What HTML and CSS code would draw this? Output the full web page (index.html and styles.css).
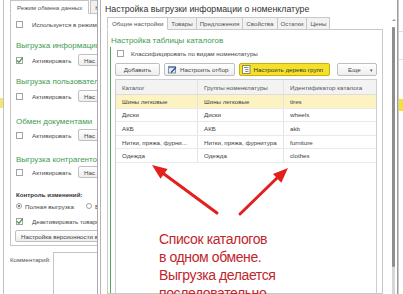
FILE: index.html
```html
<!DOCTYPE html>
<html lang="ru">
<head>
<meta charset="utf-8">
<link rel="stylesheet" href="styles.css">
</head>
<body>
<div class="desk">
  <div class="edge-left"><span class="edge-sel"></span></div>

  <div class="win-left">
    <div class="ltabs">
      <div class="ltab on">Режим обмена данных</div>
      <div class="ltab">Нас</div>
    </div>
    <div class="lpanel">
      <div class="row r-first"><span class="cb"></span><span class="lbl">Используется в режиме</span></div>

      <div class="ghead mt10">Выгрузка информации</div>
      <div class="row mt2"><span class="cb"><svg viewBox="0 0 7 7" width="7" height="7"><path d="M1 3.4 L2.9 5.3 L6.6 0.8" fill="none" stroke="#3d8f3d" stroke-width="1.2"/></svg></span><span class="lbl fix">Активировать</span><span class="btn">Нас</span></div>

      <div class="ghead mt10">Выгрузка пользовател</div>
      <div class="row mt2"><span class="cb"></span><span class="lbl fix">Активировать</span><span class="btn">Нас</span></div>

      <div class="ghead mt14">Обмен документами</div>
      <div class="row mt1"><span class="cb"></span><span class="lbl fix">Активировать</span><span class="btn">Нас</span></div>

      <div class="ghead mt13">Выгрузка контрагентов</div>
      <div class="row"><span class="cb"></span><span class="lbl fix">Активировать</span><span class="btn">Нас</span></div>

      <div class="bold-lbl">Контроль изменений:</div>
      <div class="row radios"><span class="rb on"></span><span class="rlbl">Полная выгрузка</span><span class="rb"></span><span class="rlbl short">В</span></div>
      <div class="row mt4"><span class="cb"><svg viewBox="0 0 7 7" width="7" height="7"><path d="M1 3.4 L2.9 5.3 L6.6 0.8" fill="none" stroke="#3d8f3d" stroke-width="1.2"/></svg></span><span class="lbl">Деактивировать товары</span></div>
      <div class="row mt3"><span class="btn wide">Настройка версионности вы</span></div>
    </div>
    <div class="comment">
      <span class="clbl">Комментарий:</span>
      <div class="textarea"></div>
    </div>
  </div>

  <div class="dialog">
    <div class="dtitle">Настройка выгрузки информации о номенклатуре</div>
    <div class="dbody">
      <div class="dmain">
        <div class="dtabs">
          <div class="dtab on">Общие настройки</div>
          <div class="dtab">Товары</div>
          <div class="dtab">Предложения</div>
          <div class="dtab">Свойства</div>
          <div class="dtab">Остатки</div>
          <div class="dtab">Цены</div>
        </div>
        <div class="dpanel">
          <div class="dhead">Настройка таблицы каталогов</div>
          <div class="group">
            <div class="grow"><span class="cb"></span><span class="glbl">Классифицировать по видам номенклатуры</span></div>
            <div class="btnrow">
              <span class="btn b-add">Добавить</span>
              <span class="btn b-icon"><svg viewBox="0 0 9 9" width="9" height="9"><rect x="0.5" y="1.5" width="7" height="6.5" fill="#e6edf5" stroke="#7d8fa6"/><rect x="0.5" y="1.5" width="7" height="1.6" fill="#6f8fbf"/><path d="M3 7.5 L8 2.5" stroke="#2b4f8a" stroke-width="1.3"/></svg>Настроить отбор</span>
              <span class="btn b-yellow"><svg viewBox="0 0 9 9" width="9" height="9"><rect x="0.5" y="0.5" width="7.5" height="8" fill="#fdfdf4" stroke="#8a8a70"/><path d="M2 2.5 H6.5 M3.2 4.5 H6.5 M3.2 6.5 H6.5" stroke="#8a8a8a"/></svg>Настроить дерево групп</span>
              <span class="btn b-more">Еще<span class="caret">▾</span></span>
            </div>
            <div class="dtable">
              <div class="thead">
                <div class="cell">Каталог</div>
                <div class="cell">Группы номенклатуры</div>
                <div class="cell">Идентификатор каталога</div>
              </div>
              <div class="trow sel"><div class="cell">Шины легковые</div><div class="cell">Шины легковые</div><div class="cell">tires</div></div>
              <div class="trow"><div class="cell">Диски</div><div class="cell">Диски</div><div class="cell">wheels</div></div>
              <div class="trow"><div class="cell">АКБ</div><div class="cell">АКБ</div><div class="cell">akb</div></div>
              <div class="trow"><div class="cell">Нитки, пряжа, фурни...</div><div class="cell">Нитки, пряжа, фурнитура</div><div class="cell">furniture</div></div>
              <div class="trow"><div class="cell">Одежда</div><div class="cell">Одежда</div><div class="cell">clothes</div></div>
            </div>
          </div>
        </div>
      </div>
      <div class="vscroll">
        <span class="vs-arrow"></span>
        <span class="vs-thumb"></span>
        <span class="vs-track"></span>
      </div>
    </div>
  </div>

  <div class="edge-right">
    <span class="er-line l1"></span>
    <span class="er-line l2"></span>
    <span class="er-sel"></span>
  </div>

  <svg class="arrows" width="403" height="294" viewBox="0 0 403 294">
    <g stroke="#e3201b" stroke-width="3" stroke-linecap="round" fill="#e3201b">
      <line x1="217" y1="213" x2="164" y2="174"/>
      <line x1="240" y1="214" x2="277" y2="178"/>
    </g>
    <g fill="#e3201b">
      <polygon points="152,165 167.6,169.1 160.5,178.7"/>
      <polygon points="288,168 281.3,182.7 273,174"/>
    </g>
  </svg>

  <div class="note">Список каталогов<br>в одном обмене.<br>Выгрузка делается<br>последовательно.</div>
</div>
</body>
</html>
```

FILE: styles.css
```css
* { box-sizing: border-box; margin: 0; padding: 0; }
html, body { width: 403px; height: 294px; overflow: hidden; background: #fff; }
body { font-family: "Liberation Sans", Arial, sans-serif; font-size: 6.2px; color: #474747; }

.desk { position: relative; width: 403px; height: 294px; overflow: hidden; background: #fff; }

/* far-left sliver of another window */
.edge-left { position: absolute; left: 0; top: 0; width: 4px; height: 294px; border-right: 1px solid #c2c2c2; background: #fff; }
.edge-sel { display: block; margin-top: 98px; width: 3px; height: 10px; background: #f6e27a; }

/* background window on the left */
.win-left { position: absolute; left: 4px; top: 0; width: 94px; height: 294px; padding-left: 6px; border-right: 1px solid #a9a9a9; background: #fff; overflow: hidden; }
.ltabs { display: flex; height: 14px; margin-bottom: -1px; }
.ltab { display: flex; align-items: center; padding: 0 6px; border: 1px solid #c4c4c4; background: #f1f1f1; white-space: nowrap; color: #555; }
.ltab + .ltab { margin-left: 1px; padding: 0 4px; }
.ltab.on { background: #fff; border-bottom-color: #fff; position: relative; z-index: 1; }
.lpanel { width: 120px; height: 233px; border: 1px solid #c4c4c4; padding-left: 5px; }

.row { display: flex; align-items: center; height: 12px; white-space: nowrap; }
.r-first { margin-top: 4px; }
.mt1 { margin-top: 1px; }
.mt2 { margin-top: 2px; }
.mt3 { margin-top: 3px; }
.mt4 { margin-top: 4px; }
.mt10 { margin-top: 10px; }
.mt13 { margin-top: 13px; }
.mt14 { margin-top: 14px; }

.cb { flex: none; width: 7px; height: 7px; border: 1px solid #a3a3a3; background: #fff; display: flex; align-items: center; justify-content: center; overflow: visible; }
.cb svg { flex: none; }
.lbl { margin-left: 9px; white-space: nowrap; }
.lbl.fix { width: 46px; flex: none; }
.btn { display: flex; align-items: center; height: 12px; padding: 0 5px; border: 1px solid #bfbfbf; border-radius: 2px; background: linear-gradient(#ffffff, #eeeeee); white-space: nowrap; color: #444; flex: none; }
.btn.wide { margin-left: -1px; padding: 0 5px; }

.ghead { height: 12px; line-height: 12px; font-size: 8px; color: #3f9b50; white-space: nowrap; }
.bold-lbl { margin-top: 12px; height: 10px; line-height: 10px; font-weight: bold; color: #333; white-space: nowrap; }
.radios { height: 10px; margin-top: 1px; }
.rb { flex: none; width: 6px; height: 6px; border: 1px solid #a3a3a3; border-radius: 50%; background: #fff; display: flex; align-items: center; justify-content: center; }
.rb.on::after { content: ""; width: 2px; height: 2px; border-radius: 50%; background: #555; }
.rlbl { margin-left: 3px; width: 61px; flex: none; }
.rlbl.short { width: auto; }

.comment { display: flex; margin-top: 6px; }
.clbl { padding-top: 4px; width: 43px; flex: none; color: #555; }
.textarea { width: 60px; height: 50px; border: 1px solid #c4c4c4; flex: none; }

/* foreground dialog */
.dialog { position: absolute; left: 100px; top: 0; width: 298px; height: 294px; border-left: 1px solid #b3b3b3; border-right: 1px solid #9c9c9c; background: #fff; display: flex; flex-direction: column; }
.dtitle { height: 17px; padding-left: 4px; display: flex; align-items: center; font-size: 8.8px; color: #333; white-space: nowrap; }
.dbody { flex: 1; display: flex; min-height: 0; }
.dmain { margin-left: 6px; width: 276px; display: flex; flex-direction: column; }
.dtabs { display: flex; height: 13px; margin-bottom: -1px; }
.dtab { display: flex; align-items: center; padding: 0 3px; margin-right: -1px; border: 1px solid #c8c8c8; background: #f2f2f2; color: #555; white-space: nowrap; }
.dtab.on { padding: 0 4px; background: #fff; border-bottom-color: #fff; position: relative; z-index: 1; }
.dpanel { flex: 1; border: 1px solid #c8c8c8; display: flex; flex-direction: column; min-height: 0; }
.dhead { margin: 5px 0 0 3px; height: 12px; line-height: 12px; font-size: 8px; color: #3f9b50; white-space: nowrap; }
.group { flex: 1; margin-left: 2px; border-left: 1px solid #4ea85e; padding: 0 5px 0 4px; display: flex; flex-direction: column; min-height: 0; }
.grow { display: flex; align-items: center; height: 12px; padding-left: 2px; }
.glbl { margin-left: 7px; white-space: nowrap; }
.btnrow { display: flex; height: 13px; margin-top: 4px; }
.btnrow .btn { height: 13px; }
.b-add { width: 45px; justify-content: center; }
.b-icon { margin-left: 4px; padding: 0 5px 0 3px; }
.b-icon svg, .b-yellow svg { margin-right: 3px; flex: none; }
.b-yellow { margin-left: 4px; padding: 0 6px 0 2px; background: #f5e12c; border-color: #c8b400; color: #333; }
.b-more { margin-left: auto; width: 40px; padding: 0 3px 0 10px; }
.caret { margin-left: auto; font-size: 5px; color: #555; }

.dtable { flex: 1; margin-top: 3px; border: 1px solid #cfcfcf; border-bottom: none; }
.thead, .trow { display: grid; grid-template-columns: 82px 86px 1fr; }
.thead { height: 15px; background: #f3f3f3; border-bottom: 1px solid #dcdcdc; color: #555; }
.trow { height: 13.6px; border-bottom: 1px solid #e9e9e9; color: #3e3e3e; }
.trow.sel { background: #fcf2c2; }
.cell { display: flex; align-items: center; padding-left: 6px; border-right: 1px solid #e3e3e3; white-space: nowrap; overflow: hidden; }
.cell:last-child { border-right: none; }

.vscroll { margin-left: 9px; width: 3px; display: flex; flex-direction: column; align-items: center; }
.vs-arrow { width: 0; height: 0; margin-top: 2px; border-left: 2px solid transparent; border-right: 2px solid transparent; border-bottom: 2px solid #9a9a9a; }
.vs-thumb { margin-top: 6px; width: 3px; height: 240px; background: #8e8e8e; border-radius: 1px; }
.vs-track { flex: 1; width: 3px; background: #d6d6d6; }

/* sliver of a window on the right */
.edge-right { position: absolute; left: 398px; top: 0; width: 5px; height: 294px; border-left: 1px solid #c9c9c9; background: #fff; display: flex; flex-direction: column; }
.er-line { display: block; height: 1px; background: #dcdcdc; }
.er-line.l1 { margin-top: 31px; }
.er-line.l2 { margin-top: 27px; }
.er-sel { display: block; margin-top: 39px; height: 12px; background: #f5df3a; }

/* red annotation */
.arrows { position: absolute; left: 0; top: 0; }
.note { position: absolute; left: 159px; top: 230px; font-family: "Liberation Sans", Arial, sans-serif; font-size: 14px; line-height: 18px; color: #c1262c; letter-spacing: -0.4px; white-space: nowrap; }
```
